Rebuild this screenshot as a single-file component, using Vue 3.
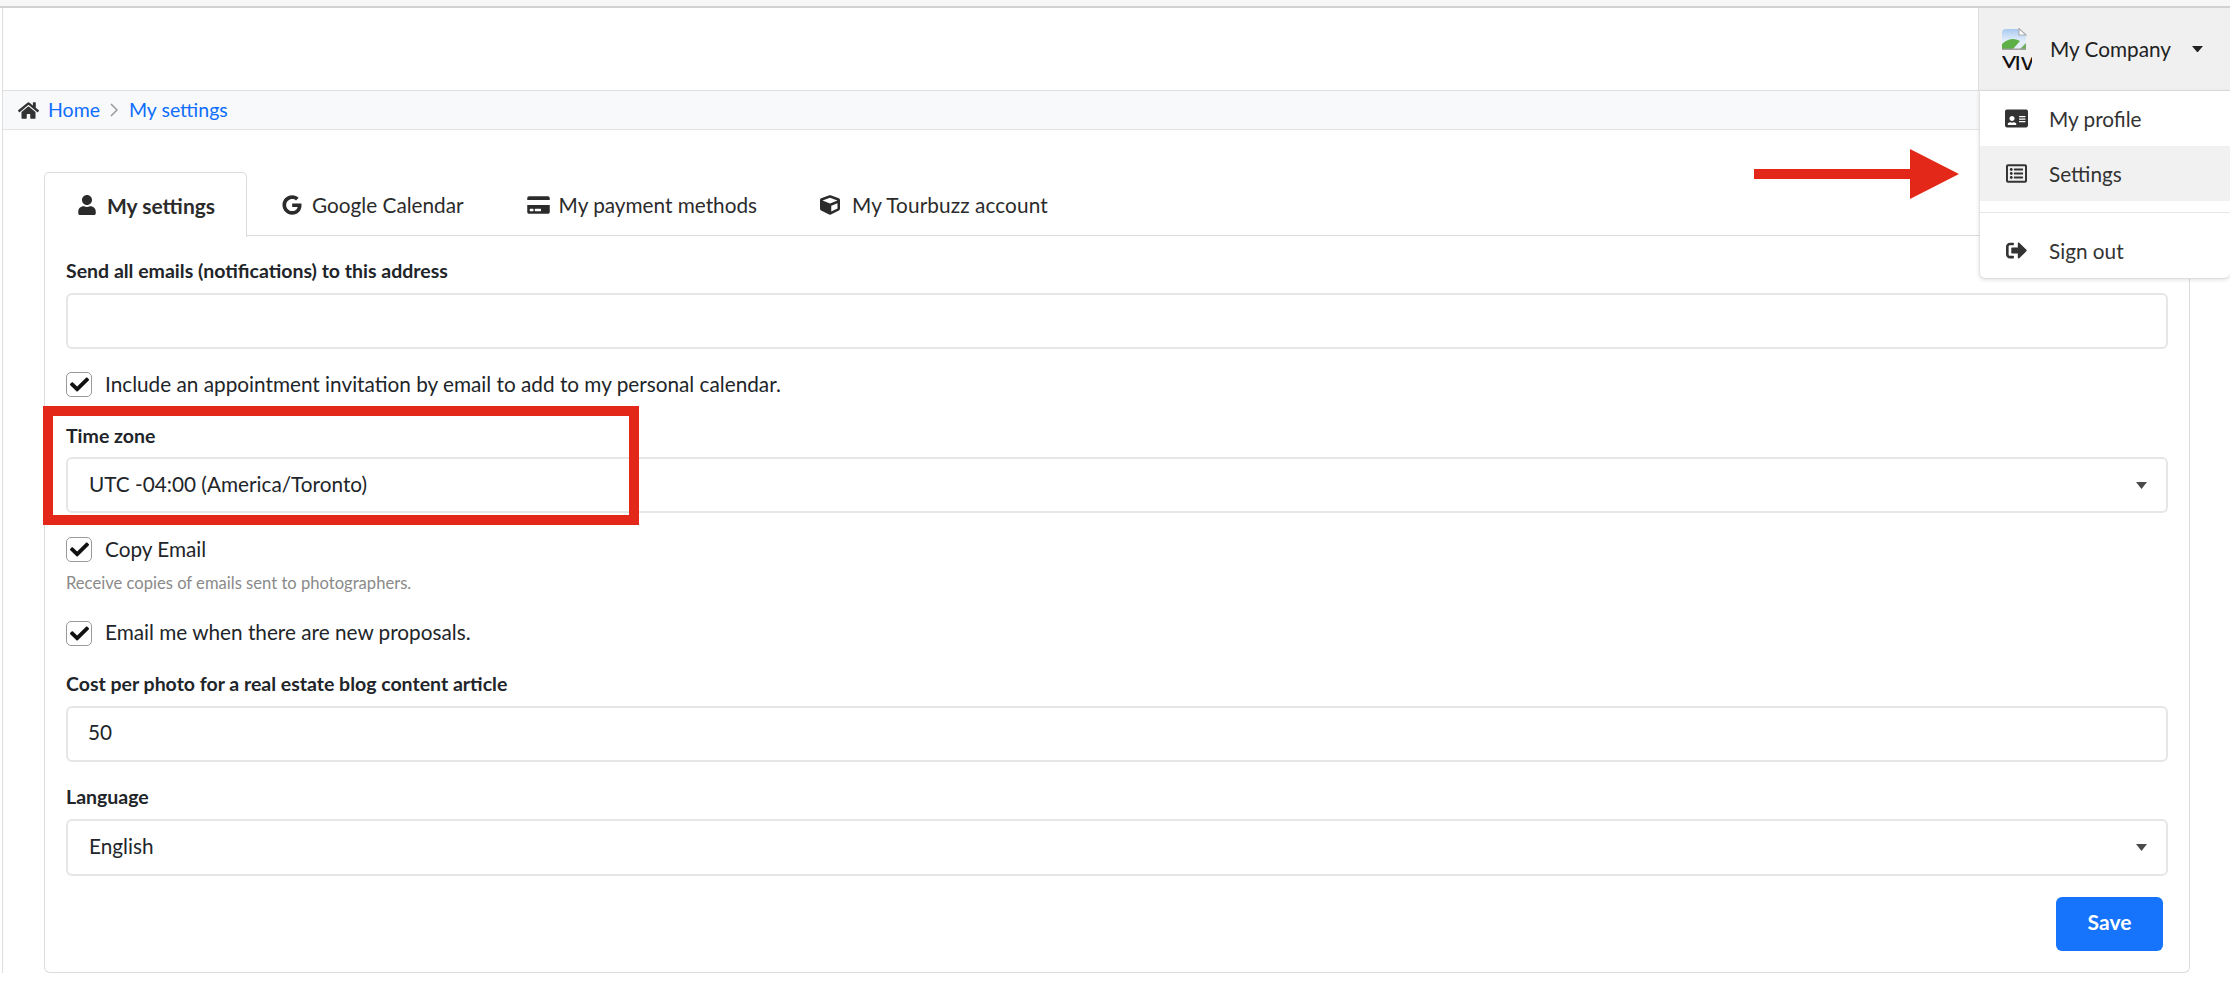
<script setup>
const tabs = [
  { label: 'My settings', active: true, vb: '0 0 448 512', w: 18, d: 'M224 256c70.7 0 128-57.3 128-128S294.7 0 224 0 96 57.3 96 128s57.3 128 128 128zm89.6 32h-16.7c-22.2 10.2-46.9 16-72.9 16s-50.6-5.8-72.9-16h-16.7C60.2 288 0 348.2 0 422.4V464c0 26.5 21.5 48 48 48h352c26.5 0 48-21.5 48-48v-41.6c0-74.2-60.2-134.4-134.4-134.4z' },
  { label: 'Google Calendar', vb: '0 0 488 512', w: 20, d: 'M488 261.8C488 403.3 391.1 504 248 504 110.8 504 0 393.2 0 256S110.8 8 248 8c66.8 0 123 24.5 166.3 64.9l-67.5 64.9C258.5 52.6 94.3 116.6 94.3 256c0 86.5 69.1 156.6 153.7 156.6 98.2 0 135-70.4 140.8-106.9H248v-85.3h236.1c2.3 12.7 3.9 24.9 3.9 41.4z' },
  { label: 'My payment methods', vb: '0 0 576 512', w: 23, d: 'M0 432c0 26.5 21.5 48 48 48h480c26.5 0 48-21.5 48-48V256H0v176zm192-68c0-6.6 5.4-12 12-12h136c6.6 0 12 5.4 12 12v40c0 6.6-5.4 12-12 12H204c-6.6 0-12-5.4-12-12v-40zm-128 0c0-6.6 5.4-12 12-12h72c6.6 0 12 5.4 12 12v40c0 6.6-5.4 12-12 12H76c-6.6 0-12-5.4-12-12v-40zM576 80v48H0V80c0-26.5 21.5-48 48-48h480c26.5 0 48 21.5 48 48z' },
  { label: 'My Tourbuzz account', vb: '0 0 512 512', w: 20, d: 'M239.1 6.3l-208 78c-18.7 7-31.1 25-31.1 45v225.1c0 18.2 10.3 34.8 26.5 42.9l208 104c13.5 6.8 29.4 6.8 42.9 0l208-104c16.3-8.1 26.5-24.8 26.5-42.9V129.3c0-20-12.4-37.9-31.1-44.9l-208-78C262 2.2 250 2.2 239.1 6.3zM256 68.4l192 72v1.1l-192 78-192-78v-1.1l192-72zm32 356V275.5l160-65v133.9l-160 80z' },
]
const check = 'M173.898 439.404l-166.4-166.4c-9.997-9.997-9.997-26.206 0-36.204l36.203-36.204c9.997-9.998 26.207-9.998 36.204 0L192 312.69 432.095 72.596c9.997-9.997 26.207-9.997 36.204 0l36.203 36.204c9.997 9.997 9.997 26.206 0 36.204l-294.4 294.401c-9.998 9.997-26.207 9.997-36.204-.001z'
</script>

<template>
  <div class="page">
    <div class="strip"></div>
    <div class="frame">
      <header class="topbar">
        <div class="user">
          <div class="avatar">
            <svg class="broken" viewBox="0 0 25 22" width="25" height="22">
              <defs>
                <linearGradient id="sky" x1="0" y1="0" x2="0" y2="1">
                  <stop offset="0" stop-color="#a9c9f0" />
                  <stop offset="0.6" stop-color="#e4eefb" />
                </linearGradient>
              </defs>
              <path d="M0 5 Q0 1 4 1 H17 L24 7 V21 H0 Z" fill="url(#sky)" />
              <path d="M17 0.5 V7 H24 Z" fill="#fff" stroke="#b0b0b0" stroke-width="1.2" />
              <path d="M0 21 V16 Q9 8 18 13 L11 21 Z" fill="#5db045" />
              <path d="M18 21 L24 15 V21 Z" fill="#6fae5c" />
              <path d="M0 21.200 H24" stroke="#9a9a9a" stroke-width="1.400" />
            </svg>
            <div class="alt-clip"><span class="alt">Mv</span></div>
          </div>
          <span class="company">My Company</span>
          <svg class="user-caret" viewBox="0 0 11 6.500" width="11" height="6.500"><path d="M0 0H11L5.500 6.500Z" fill="#222" /></svg>
        </div>
      </header>

      <nav class="crumbs">
        <svg class="home" viewBox="0 0 576 512" width="21" height="19"><path d="M280.37 148.26L96 300.11V464a16 16 0 0 0 16 16l112.06-.29a16 16 0 0 0 15.92-16V368a16 16 0 0 1 16-16h64a16 16 0 0 1 16 16v95.64a16 16 0 0 0 16 16.05L464 480a16 16 0 0 0 16-16V300L295.67 148.26a12.19 12.19 0 0 0-15.3 0zM571.6 251.47L488 182.56V44.05a12 12 0 0 0-12-12h-56a12 12 0 0 0-12 12v72.61L318.47 43a48 48 0 0 0-61 0L4.34 251.47a12 12 0 0 0-1.6 16.9l25.5 31A12 12 0 0 0 45.15 301l235.22-193.74a12.19 12.19 0 0 1 15.3 0L530.9 301a12 12 0 0 0 16.9-1.6l25.5-31a12 12 0 0 0-1.7-16.93z" fill="#333" /></svg>
        <a class="crumb-link">Home</a>
        <svg class="chev" viewBox="0 0 8 14" width="8" height="14"><path d="M1 1L7 7L1 13" fill="none" stroke="#999" stroke-width="1.5" /></svg>
        <a class="crumb-link">My settings</a>
      </nav>

      <main class="main">
        <ul class="tabs">
          <li v-for="t in tabs" :key="t.label" class="tab" :class="{ active: t.active }">
            <svg :viewBox="t.vb" :width="t.w" height="20"><path :d="t.d" fill="#2b2b2b" /></svg>
            <span>{{ t.label }}</span>
          </li>
        </ul>

        <form class="panel" @submit.prevent>
          <label class="label">Send all emails (notifications) to this address</label>
          <input class="control mt9" type="text" />

          <div class="check-row mt23">
            <span class="box"><svg viewBox="0 0 512 512" width="19" height="19"><path :d="check" fill="#111" /></svg></span>
            <span>Include an appointment invitation by email to add to my personal calendar.</span>
          </div>

          <div class="tz mt28">
            <label class="label">Time zone</label>
            <div class="select mt8">
              <span class="val">UTC -04:00 (America/Toronto)</span>
              <svg viewBox="0 0 11 7" width="11" height="7"><path d="M0 0H11L5.5 7Z" fill="#4a4a4a" /></svg>
            </div>
            <div class="red-box"></div>
          </div>

          <div class="check-row mt24">
            <span class="box"><svg viewBox="0 0 512 512" width="19" height="19"><path :d="check" fill="#111" /></svg></span>
            <span>Copy Email</span>
          </div>
          <div class="hint">Receive copies of emails sent to photographers.</div>

          <div class="check-row mt28 up">
            <span class="box"><svg viewBox="0 0 512 512" width="19" height="19"><path :d="check" fill="#111" /></svg></span>
            <span>Email me when there are new proposals.</span>
          </div>

          <label class="label mt27">Cost per photo for a real estate blog content article</label>
          <input class="control mt9" type="text" value="50" />

          <label class="label mt24">Language</label>
          <div class="select lang mt9">
            <span class="val">English</span>
            <svg viewBox="0 0 11 7" width="11" height="7"><path d="M0 0H11L5.5 7Z" fill="#4a4a4a" /></svg>
          </div>

          <div class="actions">
            <button class="save" type="submit">Save</button>
          </div>
        </form>
      </main>
    </div>

    <div class="menu">
      <div class="menu-item">
        <svg viewBox="0 0 576 512" width="23" height="23"><path d="M528 32H48C21.5 32 0 53.5 0 80v352c0 26.5 21.5 48 48 48h480c26.5 0 48-21.5 48-48V80c0-26.5-21.5-48-48-48zM352 200c0-4.4 3.6-8 8-8h144c4.4 0 8 3.6 8 8v16c0 4.4-3.6 8-8 8H360c-4.4 0-8-3.6-8-8v-16zm0 64c0-4.4 3.6-8 8-8h144c4.4 0 8 3.6 8 8v16c0 4.4-3.6 8-8 8H360c-4.4 0-8-3.6-8-8v-16zm0 64c0-4.4 3.6-8 8-8h144c4.4 0 8 3.6 8 8v16c0 4.4-3.6 8-8 8H360c-4.4 0-8-3.6-8-8v-16zM176 192c35.3 0 64 28.7 64 64s-28.7 64-64 64-64-28.7-64-64 28.7-64 64-64zM67.1 396.2C75.5 370.5 99.6 352 128 352h8.2c12.3 5.1 25.7 8 39.8 8s27.6-2.9 39.8-8h8.2c28.4 0 52.5 18.5 60.9 44.2 3.2 9.9-5.2 19.8-15.6 19.8H82.7c-10.4 0-18.8-10-15.6-19.8z" fill="#333" fill-rule="evenodd" /></svg>
        <span>My profile</span>
      </div>
      <div class="menu-item hover">
        <svg viewBox="0 0 512 512" width="23" height="21"><path d="M464 32H48C21.49 32 0 53.49 0 80v352c0 26.51 21.49 48 48 48h416c26.51 0 48-21.49 48-48V80c0-26.51-21.49-48-48-48zm-6 400H54a6 6 0 0 1-6-6V86a6 6 0 0 1 6-6h404a6 6 0 0 1 6 6v340a6 6 0 0 1-6 6zm-42-92v24c0 6.627-5.373 12-12 12H204c-6.627 0-12-5.373-12-12v-24c0-6.627 5.373-12 12-12h200c6.627 0 12 5.373 12 12zm0-96v24c0 6.627-5.373 12-12 12H204c-6.627 0-12-5.373-12-12v-24c0-6.627 5.373-12 12-12h200c6.627 0 12 5.373 12 12zm0-96v24c0 6.627-5.373 12-12 12H204c-6.627 0-12-5.373-12-12v-24c0-6.627 5.373-12 12-12h200c6.627 0 12 5.373 12 12zm-252 12c0 19.882-16.118 36-36 36s-36-16.118-36-36 16.118-36 36-36 36 16.118 36 36zm0 96c0 19.882-16.118 36-36 36s-36-16.118-36-36 16.118-36 36-36 36 16.118 36 36zm0 96c0 19.882-16.118 36-36 36s-36-16.118-36-36 16.118-36 36-36 36 16.118 36 36z" fill="#333" /></svg>
        <span>Settings</span>
      </div>
      <div class="divider"></div>
      <div class="menu-item">
        <svg viewBox="0 0 512 512" width="23" height="21"><path d="M497 273L329 441c-15 15-41 4.500-41-17v-96H152c-13.300 0-24-10.700-24-24v-96c0-13.300 10.700-24 24-24h136V88c0-21.400 25.900-32 41-17l168 168c9.300 9.400 9.300 24.600 0 34zM192 436v-40c0-6.600-5.400-12-12-12H96c-17.700 0-32-14.300-32-32V160c0-17.700 14.300-32 32-32h84c6.600 0 12-5.400 12-12V76c0-6.600-5.400-12-12-12H96c-53 0-96 43-96 96v192c0 53 43 96 96 96h84c6.600 0 12-5.400 12-12z" fill="#333" /></svg>
        <span>Sign out</span>
      </div>
    </div>

    <svg class="arrow" viewBox="0 0 205 50" width="205" height="50">
      <path d="M0 20H156V0L205 25L156 50V30H0Z" fill="#e32718" />
    </svg>
  </div>
</template>

<style>
html, body { margin: 0; background: #fff; }
</style>

<style scoped>
.page {
  position: relative;
  width: 2230px;
  height: 982px;
  overflow: hidden;
  background: #fff;
  font-family: Lato, "Liberation Sans", sans-serif;
  font-size: 20.75px;
  color: #212529;
}
.strip {
  height: 6px;
  background: #f7f7f7;
  border-bottom: 2px solid #d2d2d2;
}
.frame {
  margin-left: 2px;
  border-left: 1px solid #dedede;
}
.topbar {
  height: 83px;
  display: flex;
  justify-content: flex-end;
  border-bottom: 1px solid #dfdfdf;
  box-sizing: border-box;
}
.user {
  width: 252px;
  box-sizing: border-box;
  display: flex;
  align-items: center;
  background: #f0f0f0;
  border-left: 1px solid #dedede;
  padding-left: 23px;
}
.avatar {
  width: 30px;
  height: 42px;
  overflow: hidden;
  flex: none;
  margin-right: 18px;
}
.broken { display: block; }
.alt-clip {
  height: 14px;
  margin-top: 6px;
  overflow: hidden;
}
.alt {
  display: block;
  margin-top: -2px;
  margin-left: -5px;
  font-size: 26px;
  line-height: 14px;
  color: #111;
  white-space: nowrap;
}
.company { color: #222; }
.user-caret { margin-left: 21px; }
.crumbs {
  height: 39px;
  box-sizing: border-box;
  background: #f8f9fb;
  border-bottom: 1px solid #e4e4e4;
  display: flex;
  align-items: center;
  padding-left: 15px;
  font-size: 19.5px;
}
.crumb-link { position: relative; top: -1px; color: #0d6efd; }
.home { margin-right: 9px; }
.chev { margin: 0 10.5px; }
.main { padding: 42px 40px 0 41px; }
.tabs {
  list-style: none;
  margin: 0;
  padding: 0;
  display: flex;
  height: 64px;
  box-sizing: border-box;
  border-bottom: 1px solid #dcdcdc;
}
.tab {
  display: flex;
  align-items: center;
  gap: 10px;
  padding: 0 30.5px;
  height: 63px;
  border: 1px solid transparent;
  border-bottom: 0;
  color: #2b2b2b;
}
.tab:nth-child(2) { padding-left: 34px; }
.tab:nth-child(3) { gap: 9px; }
.tab:nth-child(4) { gap: 12px; letter-spacing: 0.1px; }
.tab.active {
  font-weight: 700;
  font-size: 21px;
  height: 64px;
  gap: 11px;
  padding: 0 31px 0 33px;
  border-color: #dcdcdc;
  background: #fff;
  border-radius: 5px 5px 0 0;
}
.panel {
  border: 1px solid #dcdcdc;
  border-top: 0;
  border-radius: 0 0 6px 6px;
  padding: 24px 21px 21px;
  height: 737px;
  box-sizing: border-box;
}
.label {
  display: block;
  font-weight: 700;
  font-size: 19.5px;
  line-height: 22px;
  height: 24px;
  color: #212529;
}
.control, .select {
  display: flex;
  align-items: center;
  width: 100%;
  height: 56px;
  box-sizing: border-box;
  border: 2px solid #e6e6e6;
  border-radius: 6px;
  background: #fff;
  font: inherit;
  color: #212529;
  outline: none;
}
.control { padding: 0 20px 4px; }
.select { justify-content: space-between; padding: 0 19px 0 21px; }
.val { position: relative; top: -1px; }
.lang .val { top: -2px; }
.check-row { display: flex; align-items: center; gap: 13px; line-height: 25px; }
.up span:last-child { position: relative; top: -1px; }
.lang { height: 57px; }
.box {
  width: 26px;
  height: 25px;
  box-sizing: border-box;
  border: 1px solid #9a9a9a;
  border-radius: 5px;
  display: flex;
  align-items: center;
  justify-content: center;
  flex: none;
}
.hint {
  margin-top: 11px;
  font-size: 16.6px;
  line-height: 20px;
  color: #8a8a8a;
}
.tz { position: relative; }
.red-box {
  position: absolute;
  left: -23px;
  top: -19px;
  width: 596px;
  height: 119px;
  box-sizing: border-box;
  border: 10px solid #e32718;
  pointer-events: none;
}
.mt8 { margin-top: 8px; }
.mt9 { margin-top: 9px; }
.mt23 { margin-top: 23px; }
.mt24 { margin-top: 24px; }
.mt27 { margin-top: 27px; }
.mt28 { margin-top: 28px; }
.actions { display: flex; justify-content: flex-end; margin-top: 21px; padding-right: 5px; }
.save {
  width: 107px;
  height: 54px;
  border: 0;
  padding: 0 0 5px;
  border-radius: 6px;
  background: #1673fb;
  color: #fff;
  font: 700 21px Lato, sans-serif;
}
.menu {
  position: absolute;
  left: 1979px;
  top: 91px;
  width: 251px;
  height: 188px;
  box-sizing: border-box;
  background: #fff;
  border-left: 1px solid #e2e2e2;
  border-bottom: 1px solid #dedede;
  border-radius: 0 0 6px 6px;
  box-shadow: 0 1px 4px rgba(0, 0, 0, 0.12);
  color: #333;
}
.menu-item {
  height: 55px;
  display: flex;
  align-items: center;
  gap: 21px;
  padding-left: 25px;
}
.menu-item.hover { background: #f1f1f1; }
.divider {
  height: 1px;
  background: #e6e6e6;
  margin: 11px 0 10px;
}
.arrow {
  position: absolute;
  left: 1754px;
  top: 149px;
}
</style>
